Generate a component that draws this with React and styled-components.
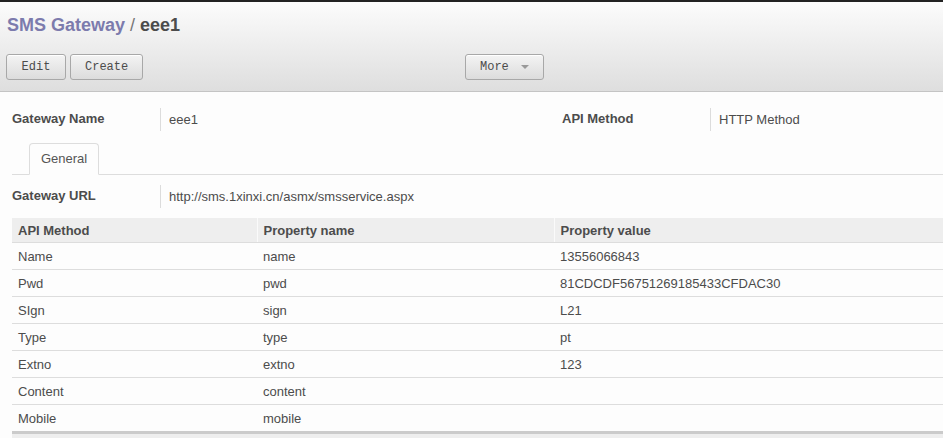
import React from "react";
import styled, { createGlobalStyle } from "styled-components";

const GlobalStyle = createGlobalStyle`
  body {
    margin: 0;
    background: #fdfdfd;
    font-family: "Liberation Sans", Arial, sans-serif;
    color: #4c4c4c;
  }
`;

const rows = [
  { method: "Name", name: "name", value: "13556066843" },
  { method: "Pwd", name: "pwd", value: "81CDCDF56751269185433CFDAC30" },
  { method: "SIgn", name: "sign", value: "L21" },
  { method: "Type", name: "type", value: "pt" },
  { method: "Extno", name: "extno", value: "123" },
  { method: "Content", name: "content", value: "" },
  { method: "Mobile", name: "mobile", value: "" },
];

const App = () => {
  return (
    <Page>
      <GlobalStyle />
      <Header>
        <Title>
          <Crumb>SMS Gateway</Crumb>
          <Slash> / </Slash>
          eee1
        </Title>
        <Toolbar>
          <Left>
            <Button>Edit</Button>
            <Button>Create</Button>
          </Left>
          <Button>
            More <Caret />
          </Button>
        </Toolbar>
      </Header>

      <Sheet>
        <FieldRow>
          <Field>
            <Label>Gateway Name</Label>
            <Value>eee1</Value>
          </Field>
          <Field>
            <Label>API Method</Label>
            <Value>HTTP Method</Value>
          </Field>
        </FieldRow>

        <Tabs>
          <Tab>General</Tab>
        </Tabs>

        <FieldRow tight>
          <Field>
            <Label>Gateway URL</Label>
            <Value>http://sms.1xinxi.cn/asmx/smsservice.aspx</Value>
          </Field>
        </FieldRow>

        <Table>
          <colgroup>
            <col style={{ width: 245 }} />
            <col style={{ width: 297 }} />
            <col />
          </colgroup>
          <thead>
            <tr>
              <Th>API Method</Th>
              <Th>Property name</Th>
              <Th>Property value</Th>
            </tr>
          </thead>
          <tbody>
            {rows.map((r) => (
              <Tr key={r.name}>
                <Td>{r.method}</Td>
                <Td>{r.name}</Td>
                <Td>{r.value}</Td>
              </Tr>
            ))}
          </tbody>
        </Table>
        <TableFoot />
      </Sheet>
    </Page>
  );
};

const Page = styled.div`
  width: 943px;
  height: 438px;
  overflow: hidden;
  border-top: 2px solid #222;
  box-sizing: border-box;
`;

const Header = styled.div`
  height: 90px;
  box-sizing: border-box;
  padding: 12px 6px 0;
  background: linear-gradient(#fcfcfc, #dedede);
  border-bottom: 1px solid #c4c4c4;
`;

const Title = styled.div`
  font-size: 18px;
  font-weight: bold;
  color: #4c4c4c;
  line-height: 22px;
  padding-left: 1px;
`;

const Crumb = styled.span`
  color: #7c7bad;
`;

const Slash = styled.span`
  font-weight: normal;
  color: #777;
`;

const Toolbar = styled.div`
  display: flex;
  margin-top: 18px;
`;

const Left = styled.div`
  display: flex;
  gap: 4px;
  width: 459px;
`;

const Button = styled.button`
  height: 26px;
  padding: 0 14px;
  border: 1px solid #a8a8a8;
  border-radius: 3px;
  background: linear-gradient(#f4f4f4, #dcdcdc);
  box-shadow: inset 0 1px 0 #fff;
  font-family: "Liberation Mono", "DejaVu Sans Mono", monospace;
  font-size: 12px;
  color: #4c4c4c;
  display: flex;
  align-items: center;
  gap: 10px;
  &:nth-child(1) {
    min-width: 60px;
    justify-content: center;
  }
`;

const Caret = styled.span`
  width: 0;
  height: 0;
  border-left: 4px solid transparent;
  border-right: 4px solid transparent;
  border-top: 4px solid #999;
  margin-left: 2px;
`;

const Sheet = styled.div`
  padding: 0 0 0 12px;
`;

const FieldRow = styled.div`
  display: flex;
  padding-top: ${(p) => (p.tight ? "10px" : "16px")};
  padding-bottom: ${(p) => (p.tight ? "10px" : "12px")};
`;

const Field = styled.div`
  display: flex;
  align-items: center;
  width: 550px;
  flex-shrink: 0;
`;

const Label = styled.div`
  width: 148px;
  font-size: 13px;
  font-weight: bold;
  color: #4c4c4c;
  align-self: flex-start;
  padding-top: 3px;
`;

const Value = styled.div`
  border-left: 1px solid #dcdcdc;
  min-height: 23px;
  padding-left: 8px;
  font-size: 13px;
  line-height: 23px;
  color: #4c4c4c;
`;

const Tabs = styled.div`
  display: flex;
  padding-left: 17px;
  border-bottom: 1px solid #ddd;
`;

const Tab = styled.div`
  width: 68px;
  height: 30px;
  margin-bottom: -1px;
  border: 1px solid #ddd;
  border-bottom-color: #fdfdfd;
  border-radius: 4px 4px 0 0;
  background: #fdfdfd;
  font-size: 13px;
  text-align: center;
  line-height: 29px;
  color: #555;
`;

const Table = styled.table`
  width: 100%;
  border-collapse: collapse;
  font-size: 13px;
  color: #4c4c4c;
`;

const Th = styled.th`
  height: 24px;
  padding: 0 6px;
  background: #eeeeee;
  text-align: left;
  font-weight: bold;
  border-bottom: 1px solid #ddd;
  & + & {
    border-left: 1px solid #fafafa;
  }
`;

const Tr = styled.tr`
  & + & td {
    border-top: 1px solid #ddd;
  }
`;

const Td = styled.td`
  height: 26px;
  padding: 0 6px;
`;

const TableFoot = styled.div`
  border-top: 3px solid #cbcbcb;
  height: 8px;
  background: #eee;
`;

export default App;
